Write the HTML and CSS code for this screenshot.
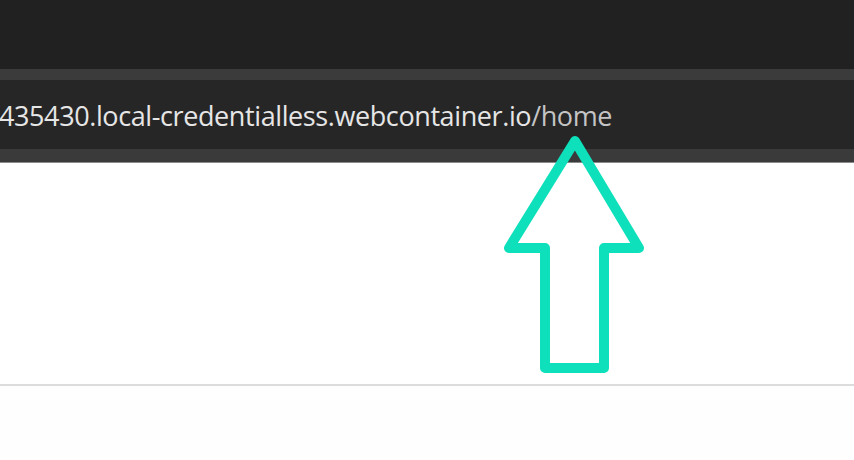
FILE: index.html
```html
<!DOCTYPE html>
<html>
<head>
<meta charset="utf-8">
<link rel="stylesheet" href="styles.css">
</head>
<body>
<div class="chrome">
  <div class="titlebar"></div>
  <div class="band-top"></div>
  <div class="addressbar">
    <span class="url"><span class="host">435430.local-credentialless.webcontainer.io</span><span class="path">/home</span></span>
  </div>
  <div class="band-bottom"></div>
</div>
<main class="page">
  <div class="hero"></div>
  <div class="rule"></div>
  <div class="below"></div>
</main>
<svg class="arrow" width="854" height="460" viewBox="0 0 854 460">
  <polygon points="575,141 509,248 545,248 545,368 604,368 604,248 639,248" fill="none" stroke="#0ee0bc" stroke-width="10" stroke-linejoin="round"/>
</svg>
</body>
</html>
```
FILE: styles.css
```css
html, body {
  margin: 0;
  padding: 0;
  width: 854px;
  height: 460px;
  overflow: hidden;
  background: #fefefe;
}
.chrome {
  display: flex;
  flex-direction: column;
}
.titlebar {
  height: 69px;
  background: #212121;
}
.band-top {
  height: 11px;
  background: #3b3b3b;
}
.addressbar {
  height: 69px;
  background: #262626;
  display: flex;
  align-items: center;
  overflow: hidden;
}
.url {
  font-family: "Open Sans", "Noto Sans", sans-serif;
  font-size: 27px;
  white-space: nowrap;
  margin-left: -1px;
  margin-top: 1px;
  letter-spacing: -0.4px;
}
.host { color: #e6e6e6; }
.path { color: #c4c4c4; }
.band-bottom {
  height: 13px;
  background: #3a3a3a;
  border-bottom: 1px solid #8a8a8a;
}
.page {
  display: flex;
  flex-direction: column;
}
.hero {
  height: 221px;
  background: #ffffff;
}
.rule {
  height: 2px;
  background: #dcdcdc;
}
.below {
  height: 74px;
  background: #fefefe;
}
.arrow {
  position: absolute;
  left: 0;
  top: 0;
  pointer-events: none;
}
```
